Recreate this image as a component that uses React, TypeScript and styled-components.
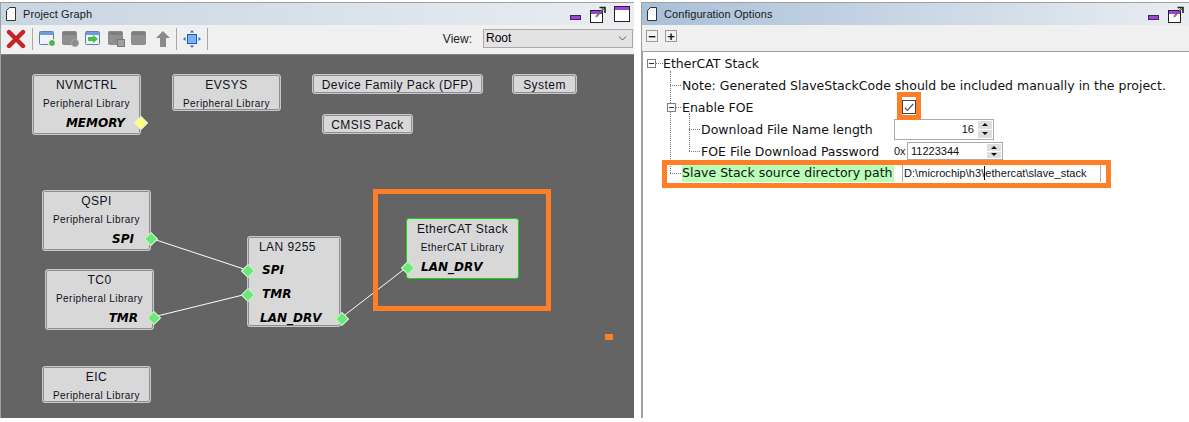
import * as React from 'react';
import styled, { createGlobalStyle } from 'styled-components';

const GlobalStyle = createGlobalStyle`
    html, body {
        margin: 0;
        padding: 0;
        background: #fff;
    }
    body {
        font-family: "DejaVu Sans", "Liberation Sans", sans-serif;
        color: #000;
    }
`;

const PageIcon = () => (
    <svg width="10" height="14" viewBox="0 0 10 14">
        <path d="M3.5.5H9.5V13.5H.5V3.5Z" fill="#fff" stroke="#333" />
    </svg>
);

const MinimizeIcon = () => (
    <svg width="11" height="5" viewBox="0 0 11 5">
        <rect x="0.5" y="0.5" width="10" height="4" fill="#a53fe0" stroke="#3a2a5a" />
    </svg>
);

const RestoreIcon = () => (
    <svg width="16" height="17" viewBox="0 0 16 17">
        <rect x="0.5" y="4.5" width="12" height="12" fill="#fff" stroke="#222" />
        <rect x="1" y="5" width="11" height="3" fill="#a53fe0" />
        <path d="M6 11L14 2M9.5 1.5H15V7" fill="none" stroke="#222" strokeWidth="1.6" />
        <path d="M6 11L14 2" fill="none" stroke="#fff" strokeWidth="0.6" />
    </svg>
);

const MaximizeIcon = () => (
    <svg width="16" height="16" viewBox="0 0 16 16">
        <rect x="0.5" y="0.5" width="15" height="15" fill="#fff" stroke="#222" />
        <rect x="1" y="1" width="14" height="3" fill="#a53fe0" />
    </svg>
);

const DeleteIcon = () => (
    <svg width="20" height="20" viewBox="0 0 20 20">
        <path d="M3 3L17 17M17 3L3 17" stroke="#c4232b" strokeWidth="4.4" strokeLinecap="round" />
    </svg>
);

const WindowIcon = ({ active, badge }: { active?: boolean; badge?: React.ReactNode }) => (
    <svg width="17" height="16" viewBox="0 0 17 16">
        <rect x="0.5" y="0.5" width="14" height="13" rx="1" fill={active ? '#eef3fa' : '#8f8f8f'} stroke={active ? '#5b7fb5' : '#8a8a8a'} />
        <rect x="1" y="1" width="13" height="3" fill={active ? '#6f9bd8' : '#7f7f7f'} />
        {badge}
    </svg>
);

const FitIcon = () => (
    <svg width="18" height="18" viewBox="0 0 18 18">
        <rect x="4.5" y="4.5" width="9" height="9" fill="#7fb0f5" stroke="#2456c4" />
        <path d="M9 0L7 2.5H11ZM9 18L7 15.5H11ZM0 9L2.5 7V11ZM18 9L15.5 7V11Z" fill="#2f6bd0" />
    </svg>
);

const UpIcon = () => (
    <svg width="14" height="16" viewBox="0 0 14 16">
        <path d="M7 0L14 7H10V16H4V7H0Z" fill="#8a8a8a" />
    </svg>
);

const ChevronIcon = () => (
    <svg width="9" height="5" viewBox="0 0 9 5">
        <path d="M1 .5L4.5 4L8 .5" fill="none" stroke="#555" />
    </svg>
);

const CheckIcon = () => (
    <svg width="10" height="9" viewBox="0 0 10 9">
        <path d="M.8 4.8L3.4 7.4L9.2 1" fill="none" stroke="#555" strokeWidth="1.3" />
    </svg>
);

const Page = styled.div`
    width: 1189px;
    height: 422px;
    display: grid;
    grid-template-columns: 634px 548px;
    column-gap: 7px;
    padding-top: 2px;
    box-sizing: border-box;
    overflow: hidden;
`;

const Panel = styled.section`
    display: flex;
    flex-direction: column;
    height: 416px;
    border-top: 1px solid #a0a0a0;
    border-left: 1px solid #a0a0a0;
    box-sizing: border-box;
`;

const TitleBar = styled.header<{ $from: string; $inset: number }>`
    height: 22px;
    display: flex;
    align-items: center;
    padding: 0 ${(p) => p.$inset}px 0 5px;
    background: linear-gradient(to right, ${(p) => p.$from}, #e9edf1);
    font-family: "Liberation Sans", sans-serif;
    font-size: 11px;
    letter-spacing: 0.1px;
    color: #1a1a1a;
`;

const TitleText = styled.span`
    margin-left: 7px;
    flex: 1;
`;

const WindowButtons = styled.div`
    display: flex;
    align-items: center;
    gap: 8px;
`;

const MinimizeSlot = styled.div`
    display: flex;
    margin-top: 6px;
    margin-right: 1px;
`;

const Toolbar = styled.div`
    height: 29px;
    box-sizing: border-box;
    display: flex;
    align-items: center;
    background: #f0f0f0;
    padding: 0 0 1px 5px;
    font-size: 12px;
    gap: 6px;
`;

const TreeToolbar = styled.div`
    height: 26px;
    display: flex;
    align-items: flex-start;
    background: #f0f0f0;
    padding: 5px 0 0 4px;
    box-sizing: border-box;
    gap: 7px;
`;

const Separator = styled.div`
    width: 1px;
    height: 22px;
    background: #a8a8a8;
`;

const UpSlot = styled.div`
    display: flex;
    margin-left: 2px;
`;

const ViewLabel = styled.span`
    margin-left: auto;
    font-family: "Liberation Sans", sans-serif;
    color: #222;
    margin-right: 5px;
    margin-bottom: 1px;
`;

const Combo = styled.div`
    width: 150px;
    height: 19px;
    box-sizing: border-box;
    display: flex;
    align-items: center;
    justify-content: space-between;
    padding: 0 5px 0 2px;
    background: #e3e3e3;
    border: 1px solid #a9a9a9;
    font-family: "Liberation Sans", sans-serif;
    margin: 0 1px 2px 0;
`;

const Canvas = styled.div`
    position: relative;
    flex: 1;
    background: #646464;
    border-top: 1px solid #808080;
`;

const Wires = styled.svg`
    position: absolute;
    left: 0;
    top: 0;
    pointer-events: none;
    z-index: 2;
`;

const Node = styled.div<{ $x: number; $y: number; $w: number; $h: number; $selected?: boolean }>`
    position: absolute;
    left: ${(p) => p.$x}px;
    top: ${(p) => p.$y}px;
    width: ${(p) => p.$w}px;
    height: ${(p) => p.$h}px;
    box-sizing: border-box;
    background: #d8d8d8;
    border: 1px solid ${(p) => (p.$selected ? '#10d810' : '#c8c8c8')};
    border-radius: 3px;
    box-shadow: ${(p) => (p.$selected ? 'none' : 'inset 0 0 0 1px #8e8e8e')};
    display: flex;
    flex-direction: column;
    color: #10101c;
`;

const NodeTitle = styled.div<{ $left?: boolean }>`
    flex: 0 0 auto;
    height: 20px;
    line-height: 20px;
    margin-bottom: ${(p) => (p.$left ? '2px' : '0')};
    font-family: "Liberation Sans", sans-serif;
    font-size: 12px;
    letter-spacing: 0.45px;
    text-align: ${(p) => (p.$left ? 'left' : 'center')};
    padding-left: ${(p) => (p.$left ? '11px' : '0')};
    white-space: nowrap;
`;

const NodeSub = styled.div`
    flex: 0 0 auto;
    height: 19px;
    line-height: 18px;
    font-family: "Liberation Sans", sans-serif;
    font-size: 10px;
    letter-spacing: 0.45px;
    text-align: center;
    white-space: nowrap;
`;

const Port = styled.div<{ $align: 'left' | 'right'; $inset: number; $height: number }>`
    flex: 0 0 auto;
    height: ${(p) => p.$height}px;
    line-height: ${(p) => p.$height - 1}px;
    font-family: "DejaVu Sans", sans-serif;
    font-size: 12px;
    font-weight: bold;
    font-style: italic;
    color: #000;
    text-align: ${(p) => p.$align};
    padding: 0 ${(p) => p.$inset}px;
    white-space: nowrap;
`;

const Pin = styled.div<{ $x: number; $y: number; $color?: string }>`
    position: absolute;
    left: ${(p) => p.$x - 4.5}px;
    top: ${(p) => p.$y - 4.5}px;
    width: 8px;
    height: 8px;
    background: ${(p) => p.$color || '#6fe67a'};
    border: 0.5px solid #d8f8d8;
    transform: rotate(45deg);
    z-index: 3;
`;

const OrangeFrame = styled.div<{ $x: number; $y: number; $w: number; $h: number }>`
    position: absolute;
    left: ${(p) => p.$x}px;
    top: ${(p) => p.$y}px;
    width: ${(p) => p.$w}px;
    height: ${(p) => p.$h}px;
    box-sizing: border-box;
    border: 5px solid #ff7f27;
    z-index: 4;
`;

const OrangeDot = styled.div`
    position: absolute;
    left: 604px;
    top: 279px;
    width: 8px;
    height: 6px;
    background: #ff7f27;
`;

const SquareButton = styled.div`
    width: 12px;
    height: 12px;
    box-sizing: border-box;
    border: 1px solid #9a9a9a;
    background: #f2f2f2;
    display: flex;
    align-items: center;
    justify-content: center;
    font-family: "Liberation Sans", sans-serif;
    font-size: 13px;
    font-weight: bold;
    line-height: 1;
    color: #111;
`;

const Tree = styled.div`
    position: relative;
    flex: 1;
    background: #fff;
    border-top: 1px solid #a0a0a0;
    border-left: 1px solid #a0a0a0;
`;

const Row = styled.div`
    height: 22px;
    display: grid;
    grid-template-columns: 251px 1fr;
    align-items: center;
    font-size: 12.5px;
    color: #111;
`;

const RowLabel = styled.div<{ $depth: number }>`
    display: flex;
    align-items: center;
    padding-left: ${(p) => p.$depth * 19 + 20}px;
    white-space: nowrap;
    position: relative;
    height: 100%;
`;

const Stub = styled.span<{ $left: number; $width: number }>`
    position: absolute;
    left: ${(p) => p.$left}px;
    top: 11px;
    width: ${(p) => p.$width}px;
    border-top: 1px dotted #777;
`;

const Expander = styled.span<{ $left: number }>`
    position: absolute;
    left: ${(p) => p.$left}px;
    top: 7px;
    width: 9px;
    height: 9px;
    box-sizing: border-box;
    background: #fff;
    border: 1px solid #808080;
    z-index: 1;
    &::after {
        content: '';
        position: absolute;
        left: 1px;
        right: 1px;
        top: 3px;
        height: 1px;
        background: #333;
    }
`;

const Highlight = styled.span`
    background: #b8ffb8;
    line-height: 18px;
    padding-right: 1px;
`;

const Guide = styled.div<{ $x: number; $y: number; $h: number }>`
    position: absolute;
    left: ${(p) => p.$x}px;
    top: ${(p) => p.$y}px;
    height: ${(p) => p.$h}px;
    border-left: 1px dotted #777;
`;

const CheckCell = styled.div`
    margin-left: 8px;
    width: 14px;
    height: 14px;
    box-sizing: border-box;
    border: 1px solid #444;
    background: #fff;
    display: flex;
    align-items: center;
    justify-content: center;
`;

const Prefix = styled.span`
    font-family: "Liberation Sans", sans-serif;
    font-size: 11px;
    color: #111;
    width: 13px;
`;

const Cell = styled.div`
    display: flex;
    align-items: center;
`;

const Field = styled.div<{ $w: number; $h: number; $right?: boolean }>`
    width: ${(p) => p.$w}px;
    height: ${(p) => p.$h}px;
    box-sizing: border-box;
    border: 1px solid #aaa;
    background: #fff;
    display: flex;
    align-items: center;
    justify-content: ${(p) => (p.$right ? 'flex-end' : 'flex-start')};
    padding-left: 3px;
    font-family: "Liberation Sans", sans-serif;
    font-size: 11px;
    color: #111;
`;

const SpinValue = styled.span`
    flex: 1;
    text-align: right;
    padding-right: 3px;
`;

const SpinPlain = styled.span`
    flex: 1;
`;

const Spinner = styled.div`
    width: 16px;
    height: 100%;
    display: flex;
    flex-direction: column;
    gap: 1px;
    padding: 1px;
    box-sizing: border-box;
`;

const SpinButton = styled.div<{ $up?: boolean }>`
    flex: 1;
    background: #dedede;
    display: flex;
    align-items: center;
    justify-content: center;
    &::after {
        content: '';
        border-left: 3px solid transparent;
        border-right: 3px solid transparent;
        ${(p) => (p.$up ? 'border-bottom: 3px solid #111;' : 'border-top: 3px solid #111;')}
    }
`;

const PathField = styled.div`
    margin-left: 8px;
    width: 199px;
    height: 18px;
    box-sizing: border-box;
    border-left: 1px solid #aaa;
    border-right: 1px solid #aaa;
    padding-left: 1px;
    display: flex;
    align-items: center;
    font-family: "Liberation Sans", sans-serif;
    font-size: 11px;
    letter-spacing: 0.05px;
    color: #111;
    white-space: nowrap;
`;

const Caret = styled.span`
    display: inline-block;
    width: 1px;
    height: 14px;
    background: #000;
`;

const Spin = () => (
    <Spinner>
        <SpinButton $up />
        <SpinButton />
    </Spinner>
);

const ProjectGraph = () => (
    <Panel>
        <TitleBar $from="#c8d5e2" $inset={4}>
            <PageIcon />
            <TitleText>Project Graph</TitleText>
            <WindowButtons>
                <MinimizeSlot>
                    <MinimizeIcon />
                </MinimizeSlot>
                <RestoreIcon />
                <MaximizeIcon />
            </WindowButtons>
        </TitleBar>
        <Toolbar>
            <DeleteIcon />
            <Separator />
            <WindowIcon active badge={<circle cx="13" cy="12" r="3.5" fill="#4caf50" stroke="#fff" />} />
            <WindowIcon badge={<circle cx="13" cy="12" r="3.5" fill="#8a8a8a" stroke="#aaa" />} />
            <WindowIcon active badge={<path d="M3 6H8V4L13 8L8 12V10H3Z" fill="#43c043" />} />
            <WindowIcon badge={<rect x="9.5" y="8.5" width="7" height="7" fill="#a0a0a0" stroke="#777" />} />
            <WindowIcon />
            <UpSlot>
                <UpIcon />
            </UpSlot>
            <Separator />
            <FitIcon />
            <Separator />
            <ViewLabel>View:</ViewLabel>
            <Combo>
                Root
                <ChevronIcon />
            </Combo>
        </Toolbar>
        <Canvas>
            <Wires width="634" height="364" viewBox="0 0 634 364">
                <g stroke="#fff" strokeWidth="1" fill="none">
                    <path d="M149 183L246 215" />
                    <path d="M152 262L246 239" />
                    <path d="M340 263L406 212" />
                </g>
            </Wires>
            <Node $x={31} $y={19} $w={109} $h={61}>
                <NodeTitle>NVMCTRL</NodeTitle>
                <NodeSub>Peripheral Library</NodeSub>
                <Port $align="right" $inset={15} $height={19}>MEMORY</Port>
            </Node>
            <Pin $x={139.5} $y={67} $color="#ffff80" />
            <Node $x={171} $y={19} $w={109} $h={37}>
                <NodeTitle>EVSYS</NodeTitle>
                <NodeSub>Peripheral Library</NodeSub>
            </Node>
            <Node $x={311} $y={19} $w={171} $h={20}>
                <NodeTitle>Device Family Pack (DFP)</NodeTitle>
            </Node>
            <Node $x={511} $y={19} $w={65} $h={20}>
                <NodeTitle>System</NodeTitle>
            </Node>
            <Node $x={321} $y={59} $w={91} $h={20}>
                <NodeTitle>CMSIS Pack</NodeTitle>
            </Node>
            <Node $x={41} $y={135} $w={109} $h={61}>
                <NodeTitle>QSPI</NodeTitle>
                <NodeSub>Peripheral Library</NodeSub>
                <Port $align="right" $inset={16} $height={19}>SPI</Port>
            </Node>
            <Pin $x={149} $y={183} />
            <Node $x={44} $y={214} $w={109} $h={61}>
                <NodeTitle>TC0</NodeTitle>
                <NodeSub>Peripheral Library</NodeSub>
                <Port $align="right" $inset={15} $height={19}>TMR</Port>
            </Node>
            <Pin $x={152} $y={262} />
            <Node $x={246} $y={181} $w={94} $h={91}>
                <NodeTitle $left>LAN 9255</NodeTitle>
                <Port $align="left" $inset={14} $height={24}>SPI</Port>
                <Port $align="left" $inset={14} $height={24}>TMR</Port>
                <Port $align="left" $inset={12} $height={24}>LAN_DRV</Port>
            </Node>
            <Pin $x={246} $y={215} />
            <Pin $x={246} $y={239} />
            <Pin $x={340} $y={263} />
            <Node $x={405} $y={163} $w={113} $h={61} $selected>
                <NodeTitle>EtherCAT Stack</NodeTitle>
                <NodeSub>EtherCAT Library</NodeSub>
                <Port $align="left" $inset={14} $height={19}>LAN_DRV</Port>
            </Node>
            <Pin $x={406} $y={212} />
            <Node $x={41} $y={311} $w={109} $h={37}>
                <NodeTitle>EIC</NodeTitle>
                <NodeSub>Peripheral Library</NodeSub>
            </Node>
            <OrangeFrame $x={372} $y={134} $w={178} $h={122} />
            <OrangeDot />
        </Canvas>
    </Panel>
);

const ConfigurationOptions = () => (
    <Panel>
        <TitleBar $from="#a9c0d9" $inset={5}>
            <PageIcon />
            <TitleText>Configuration Options</TitleText>
            <WindowButtons>
                <MinimizeSlot>
                    <MinimizeIcon />
                </MinimizeSlot>
                <RestoreIcon />
            </WindowButtons>
        </TitleBar>
        <TreeToolbar>
            <SquareButton>−</SquareButton>
            <SquareButton>+</SquareButton>
        </TreeToolbar>
        <Tree>
            <Guide $x={27} $y={19} $h={102} />
            <Guide $x={46} $y={61} $h={38} />
            <Row>
                <RowLabel $depth={0}>
                    <Expander $left={4} />
                    <Stub $left={13} $width={7} />
                    EtherCAT Stack
                </RowLabel>
            </Row>
            <Row>
                <RowLabel $depth={1}>
                    <Stub $left={27} $width={11} />
                    Note: Generated SlaveStackCode should be included manually in the project.
                </RowLabel>
            </Row>
            <Row>
                <RowLabel $depth={1}>
                    <Expander $left={24} />
                    <Stub $left={33} $width={5} />
                    Enable FOE
                </RowLabel>
                <CheckCell>
                    <CheckIcon />
                </CheckCell>
            </Row>
            <Row>
                <RowLabel $depth={2}>
                    <Stub $left={46} $width={11} />
                    Download File Name length
                </RowLabel>
                <Field $w={100} $h={21} $right>
                    <SpinValue>16</SpinValue>
                    <Spin />
                </Field>
            </Row>
            <Row>
                <RowLabel $depth={2}>
                    <Stub $left={46} $width={11} />
                    FOE File Download Password
                </RowLabel>
                <Cell>
                    <Prefix>0x</Prefix>
                    <Field $w={96} $h={18}>
                        <SpinPlain>11223344</SpinPlain>
                        <Spin />
                    </Field>
                </Cell>
            </Row>
            <Row>
                <RowLabel $depth={1}>
                    <Stub $left={27} $width={11} />
                    <Highlight>Slave Stack source directory path</Highlight>
                </RowLabel>
                <PathField>
                    D:\microchip\h3\
                    <Caret />
                    ethercat\slave_stack
                </PathField>
            </Row>
            <OrangeFrame $x={254} $y={40} $w={24} $h={28} />
            <OrangeFrame $x={19} $y={108} $w={449} $h={28} />
        </Tree>
    </Panel>
);

const App = () => (
    <Page>
        <GlobalStyle />
        <ProjectGraph />
        <ConfigurationOptions />
    </Page>
);

export default App;
